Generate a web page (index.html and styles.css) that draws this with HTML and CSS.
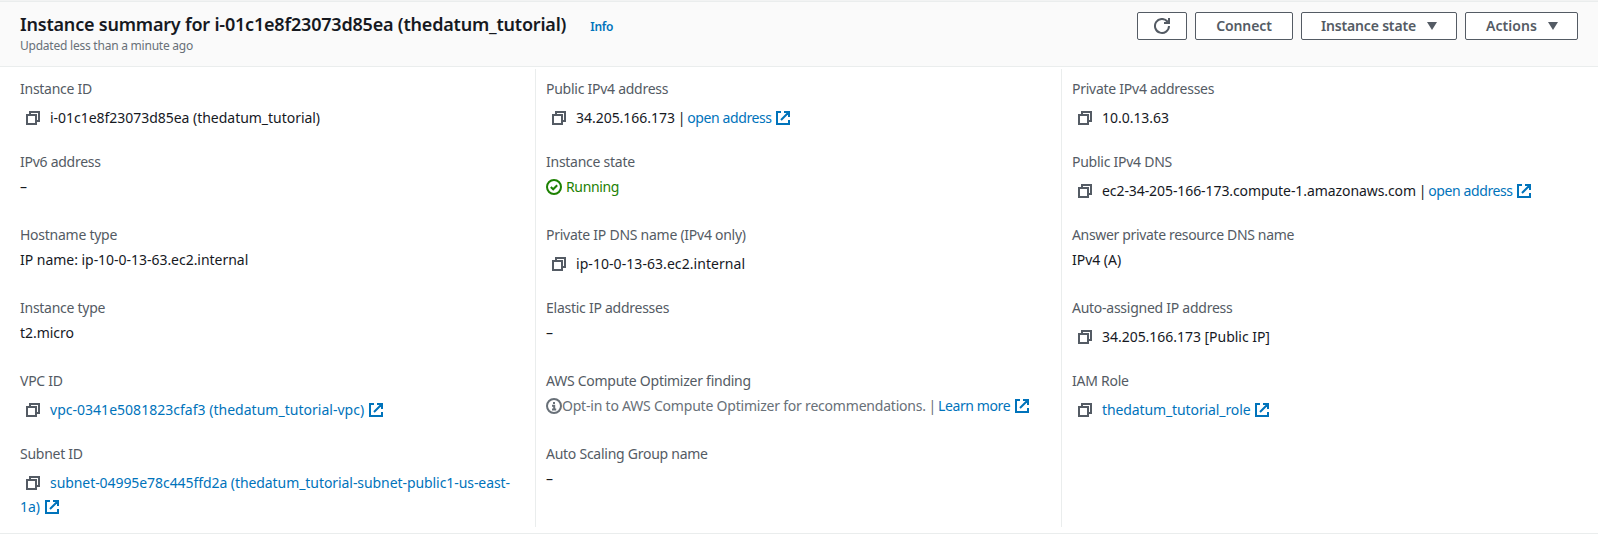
FILE: index.html
```html
<!DOCTYPE html>
<html lang="en">
<head>
<meta charset="utf-8">
<title>Instance summary</title>
<link rel="stylesheet" href="styles.css">
</head>
<body>
<svg class="sprite" aria-hidden="true">
  <symbol id="copy" viewBox="0 0 16 16"><path d="M2 5h9v9H2z M5 5V2h9v9h-3"/></symbol>
  <symbol id="external" viewBox="0 0 16 16"><path d="M6 2H2v12h12v-4 M9 2h5v5 M6 10l8-8"/></symbol>
  <symbol id="success" viewBox="0 0 16 16"><circle cx="8" cy="8" r="7"/><path d="M4.8 8l2.4 2.3 4-4.1"/></symbol>
  <symbol id="info" viewBox="0 0 16 16"><circle cx="8" cy="8" r="7"/><path d="M7 4.9h2 M6 7.7h2.2V11 M6 11.5h4.2"/></symbol>
  <symbol id="refresh" viewBox="0 0 16 16"><path d="M15 8a7 7 0 1 1-1.6-4.5L15 5 M15 0v5h-5"/></symbol>
</svg>
<section class="panel">
  <header class="header">
    <div class="heading">
      <div class="title-row">
        <h2 class="title">Instance summary for i-01c1e8f23073d85ea (thedatum_tutorial)</h2>
        <a class="info-link">Info</a>
      </div>
      <p class="updated">Updated less than a minute ago</p>
    </div>
    <div class="buttons">
      <button class="btn btn-refresh" aria-label="Refresh"><svg class="icon"><use href="#refresh"/></svg></button>
      <button class="btn btn-connect">Connect</button>
      <button class="btn btn-state"><span>Instance state</span><i class="caret"></i></button>
      <button class="btn btn-actions"><span>Actions</span><i class="caret"></i></button>
    </div>
  </header>
  <div class="columns">
    <div class="column">
      <div class="field"><div class="label">Instance ID</div><div class="value copyable"><svg class="icon copy"><use href="#copy"/></svg>i-01c1e8f23073d85ea (thedatum_tutorial)</div></div>
      <div class="field"><div class="label">IPv6 address</div><div class="value">–</div></div>
      <div class="field"><div class="label">Hostname type</div><div class="value">IP name: ip-10-0-13-63.ec2.internal</div></div>
      <div class="field"><div class="label">Instance type</div><div class="value">t2.micro</div></div>
      <div class="field"><div class="label">VPC ID</div><div class="value copyable"><svg class="icon copy"><use href="#copy"/></svg><a class="link vpc">vpc-0341e5081823cfaf3 (thedatum_tutorial-vpc)</a><svg class="icon external"><use href="#external"/></svg></div></div>
      <div class="field"><div class="label">Subnet ID</div><div class="value copyable"><svg class="icon copy"><use href="#copy"/></svg><a class="link subnet">subnet-04995e78c445ffd2a (thedatum_tutorial-subnet-public1-us-east-<wbr>1a)</a><svg class="icon external"><use href="#external"/></svg></div></div>
    </div>
    <div class="column">
      <div class="field"><div class="label">Public IPv4 address</div><div class="value copyable"><svg class="icon copy"><use href="#copy"/></svg>34.205.166.173<span class="pipe"> | </span><a class="link open">open address</a><svg class="icon external"><use href="#external"/></svg></div></div>
      <div class="field"><div class="label">Instance state</div><div class="value running"><svg class="icon status"><use href="#success"/></svg>Running</div></div>
      <div class="field"><div class="label">Private IP DNS name (IPv4 only)</div><div class="value copyable private-dns"><svg class="icon copy"><use href="#copy"/></svg>ip-10-0-13-63.ec2.internal</div></div>
      <div class="field"><div class="label">Elastic IP addresses</div><div class="value">–</div></div>
      <div class="field"><div class="label">AWS Compute Optimizer finding</div><div class="value optimizer"><svg class="icon status"><use href="#info"/></svg>Opt-in to AWS Compute Optimizer for recommendations.<span class="pipe"> | </span><a class="link learn">Learn more</a><svg class="icon external"><use href="#external"/></svg></div></div>
      <div class="field"><div class="label">Auto Scaling Group name</div><div class="value">–</div></div>
    </div>
    <div class="column">
      <div class="field"><div class="label">Private IPv4 addresses</div><div class="value copyable"><svg class="icon copy"><use href="#copy"/></svg>10.0.13.63</div></div>
      <div class="field"><div class="label">Public IPv4 DNS</div><div class="value copyable public-dns"><svg class="icon copy"><use href="#copy"/></svg>ec2-34-205-166-173.compute-1.amazonaws.com<span class="pipe"> | </span><a class="link open">open address</a><svg class="icon external"><use href="#external"/></svg></div></div>
      <div class="field"><div class="label answer">Answer private resource DNS name</div><div class="value">IPv4 (A)</div></div>
      <div class="field"><div class="label">Auto-assigned IP address</div><div class="value copyable"><svg class="icon copy"><use href="#copy"/></svg>34.205.166.173 [Public IP]</div></div>
      <div class="field"><div class="label">IAM Role</div><div class="value copyable"><svg class="icon copy"><use href="#copy"/></svg><a class="link role">thedatum_tutorial_role</a><svg class="icon external"><use href="#external"/></svg></div></div>
    </div>
  </div>
</section>
</body>
</html>
```
FILE: styles.css
```css
* { box-sizing: border-box; }
body {
  margin: 0;
  background: #fff;
  color: #16191f;
  font: 14px/24px "Noto Sans", sans-serif;
}
.sprite { position: absolute; width: 0; height: 0; }
.panel {
  height: 534px;
  margin-bottom: 1px;
  border-top: 1px solid #f2f3f3;
  border-bottom: 1px solid #eaeded;
}
.header {
  display: flex;
  justify-content: space-between;
  height: 66px;
  padding: 10px 20px 0;
  background: #fafafa;
  border-top: 1px solid #eaeded;
  border-bottom: 1px solid #eaeded;
}
.title-row { display: flex; align-items: baseline; gap: 24px; }
.title { margin: 0; font-size: 18px; line-height: 24px; font-weight: 600; letter-spacing: -.2px; }
.info-link { color: #0073bb; font-size: 12px; line-height: 18px; font-weight: 600; letter-spacing: -.24px; }
.updated { margin: 2px 0 0; color: #687078; font-size: 12px; line-height: 16px; letter-spacing: -.23px; }
.buttons { display: flex; gap: 8px; }
.btn {
  display: flex;
  align-items: center;
  justify-content: center;
  height: 28px;
  padding: 0;
  background: #fff;
  border: 1px solid #545b64;
  border-radius: 2px;
  color: #545b64;
  font: 600 14px/20px "Noto Sans", sans-serif;
  letter-spacing: -.1px;
}
.btn-refresh { width: 50px; }
.btn-connect { width: 98px; }
.btn-state { width: 156px; gap: 11px; letter-spacing: -.18px; }
.btn-actions { width: 113px; gap: 11px; padding-left: 1px; letter-spacing: .06px; }
.caret {
  border: 5px solid transparent;
  border-top: 8px solid #545b64;
  border-bottom: 0;
}
.icon { width: 16px; height: 16px; fill: none; stroke: currentColor; stroke-width: 2; }
.columns { display: grid; grid-template-columns: 535px 526px 1fr; height: 460px; padding-top: 2px; }
.column { padding: 9px 10px 0; border-left: 1px solid #eaeded; }
.column:first-child { padding: 9px 20px 0; border-left: 0; }
.field { height: 73px; }
.label { color: #545b64; line-height: 22px; letter-spacing: -.26px; }
.label.answer { letter-spacing: -.34px; }
.value { padding-top: 2px; letter-spacing: -.03px; white-space: nowrap; }
.copyable { padding-top: 6px; }
.value .icon { vertical-align: -3px; }
.copy { margin: 0 9px 0 5px; color: #545b64; }
.external { margin-left: 4px; color: #0073bb; }
.link { color: #0073bb; }
.pipe { letter-spacing: -.9px; }
.open { letter-spacing: -.4px; }
.open + .external { margin-left: 3px; }
.learn { letter-spacing: -.4px; }
.vpc { letter-spacing: .02px; }
.role { letter-spacing: -.11px; }
.subnet { white-space: normal; letter-spacing: -.07px; }
.private-dns { letter-spacing: .06px; }
.public-dns { letter-spacing: -.08px; }
.running { color: #1d8102; letter-spacing: -.35px; }
.status { margin-right: 4px; }
.optimizer { color: #687078; letter-spacing: -.21px; }
.optimizer .status { margin-right: 0; }
```
